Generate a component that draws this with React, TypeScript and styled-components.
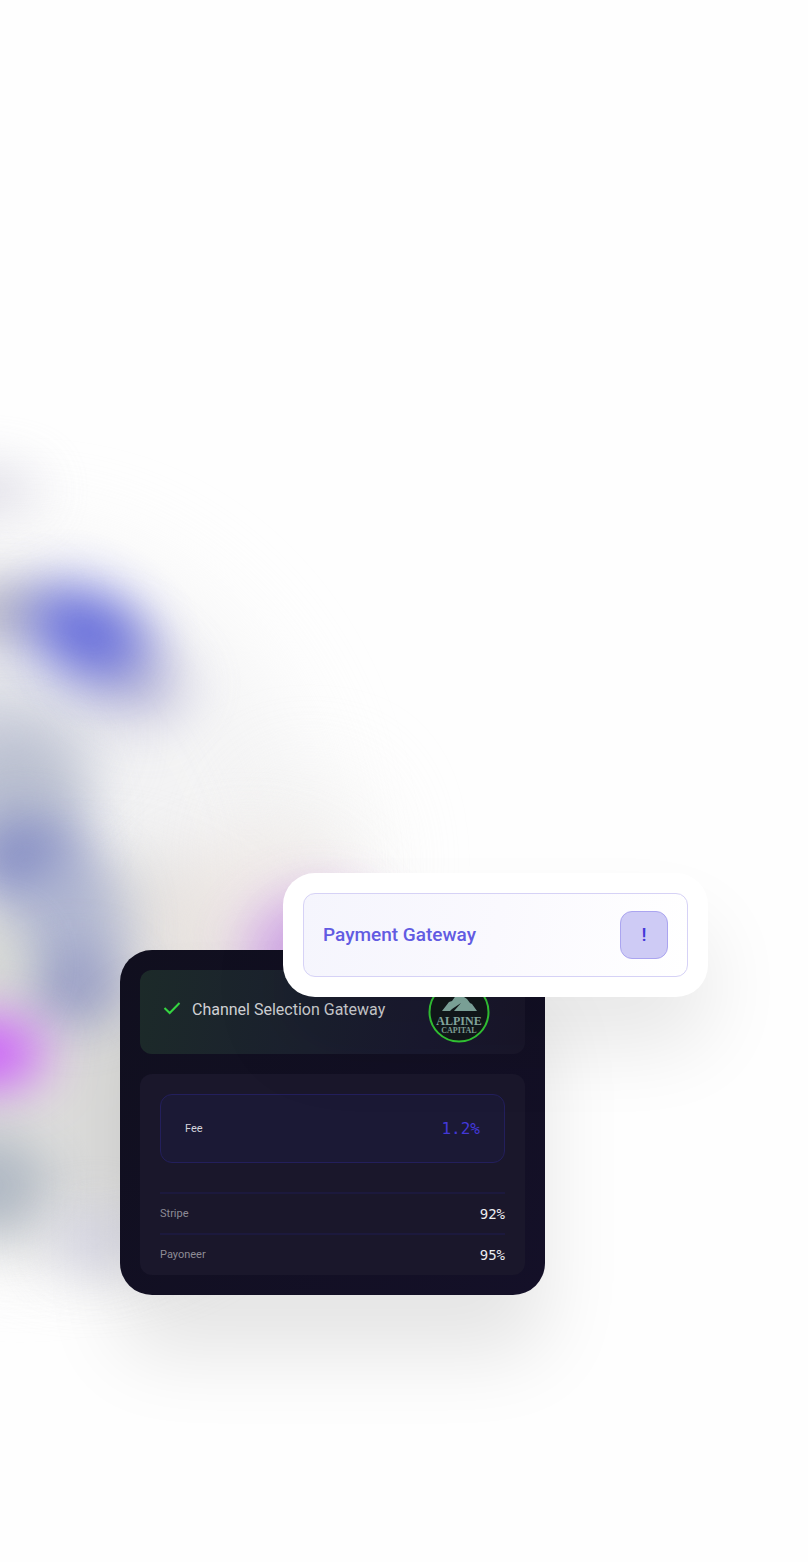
import React from "react";
import styled, { createGlobalStyle } from "styled-components";

const GlobalStyle = createGlobalStyle`
  *, *::before, *::after { box-sizing: border-box; }
  body {
    margin: 0;
    background: #fefefe;
    font-family: Roboto, "Noto Sans", sans-serif;
  }
`;

const Page = styled.main`
  position: relative;
  overflow: hidden;
  padding: 873px 100px 267px 120px;
`;

const Backdrop = styled.svg`
  position: absolute;
  top: 0;
  left: 0;
`;

const Cards = styled.div`
  position: relative;
  display: flex;
  flex-direction: column;
`;

const Card = styled.section`
  width: 425px;
  max-width: 100%;
  padding: 20px;
  border-radius: 32px;
`;

const GatewayCard = styled(Card)`
  position: relative;
  z-index: 1;
  align-self: flex-end;
  background: #ffffff;
  box-shadow: 0 50px 80px rgba(0, 0, 0, 0.09);
`;

const GatewayField = styled.div`
  display: flex;
  align-items: center;
  justify-content: space-between;
  height: 84px;
  padding: 0 19px;
  border: 1px solid #d6d2f6;
  border-radius: 12px;
  background: linear-gradient(100deg, #f5f5fd, #faf9fe 50%, #ffffff);
`;

const GatewayTitle = styled.h2`
  margin: 0;
  color: #625be2;
  font-size: 19px;
  font-weight: 500;
  line-height: 24px;
`;

const AlertButton = styled.button`
  width: 48px;
  height: 48px;
  padding: 0;
  border: 1px solid #aba5f0;
  border-radius: 12px;
  background: #cecbf5;
  color: #4338d8;
  font: 500 19px/24px Roboto, sans-serif;
`;

const ChannelCard = styled(Card)`
  display: flex;
  flex-direction: column;
  gap: 20px;
  margin-top: -47px;
  background: linear-gradient(135deg, #100f1e, #141028);
  box-shadow: 0 60px 80px rgba(0, 0, 0, 0.1);
`;

const ChannelRow = styled.header`
  display: flex;
  align-items: center;
  gap: 8px;
  height: 84px;
  padding: 0 35px 0 20px;
  border-radius: 12px;
  background: linear-gradient(100deg, #1c2a29, #1b202f 45%, #1a1930 75%, #19162a);
`;

const ChannelTitle = styled.h2`
  flex: 1;
  margin: 0;
  padding-bottom: 4px;
  color: #d0d1d4;
  font-size: 16px;
  font-weight: 400;
  line-height: 24px;
  white-space: nowrap;
`;

const CheckMark = styled.svg`
  margin-bottom: 6px;
  flex: none;
`;

const DetailPanel = styled.div`
  padding: 20px 20px 1px;
  border-radius: 12px;
  background: #1a172b;
`;

const FeeBox = styled.dl`
  display: flex;
  align-items: center;
  justify-content: space-between;
  height: 69px;
  margin: 0 0 29px;
  padding: 0 24px;
  border: 1px solid #231f5c;
  border-radius: 12px;
  background: #1b1935;
`;

const RateList = styled.dl`
  margin: 0;
`;

const RateRow = styled.div`
  display: flex;
  align-items: center;
  justify-content: space-between;
  height: 41px;
  border-top: 2px solid #1c193d;
`;

const Label = styled.dt<{ $bright?: boolean }>`
  color: ${({ $bright }) => ($bright ? "#d4d3dc" : "#8d8b95")};
  font-size: 11px;
  line-height: 16px;
`;

const Value = styled.dd<{ $accent?: boolean }>`
  margin: 0;
  color: ${({ $accent }) => ($accent ? "#4338d8" : "#ececf0")};
  font-family: "DejaVu Sans Mono", monospace;
  font-size: ${({ $accent }) => ($accent ? "16px" : "14px")};
  line-height: 16px;
`;

type Blob = {
  x: number;
  y: number;
  rx: number;
  ry: number;
  color: string;
  opacity: number;
  blur: "s" | "m" | "l";
  turn?: number;
};

const blobs: Blob[] = [
  { x: 20, y: 890, rx: 300, ry: 350, color: "#ededee", opacity: 0.6, blur: "l" },
  { x: 310, y: 860, rx: 60, ry: 80, color: "#ecebe9", opacity: 0.6, blur: "l" },
  { x: 90, y: 1060, rx: 210, ry: 205, color: "#d8d8d6", opacity: 0.8, blur: "m" },
  { x: 250, y: 930, rx: 110, ry: 90, color: "#eee6e2", opacity: 0.7, blur: "m" },
  { x: -20, y: 490, rx: 60, ry: 20, color: "#c9c7d6", opacity: 0.75, blur: "s" },
  { x: -10, y: 735, rx: 110, ry: 60, color: "#cdd0dc", opacity: 0.8, blur: "m" },
  { x: 5, y: 612, rx: 55, ry: 28, color: "#8c8ca8", opacity: 0.7, blur: "s" },
  { x: 128, y: 672, rx: 62, ry: 42, color: "#aaa9cf", opacity: 0.7, blur: "s", turn: 35 },
  { x: 86, y: 632, rx: 62, ry: 42, color: "#5a62da", opacity: 0.9, blur: "s", turn: 25 },
  { x: 15, y: 805, rx: 74, ry: 74, color: "#adb4c8", opacity: 0.75, blur: "s", turn: -12 },
  { x: 26, y: 860, rx: 54, ry: 42, color: "#747dc0", opacity: 0.8, blur: "s" },
  { x: 68, y: 925, rx: 56, ry: 74, color: "#a4acce", opacity: 0.75, blur: "s" },
  { x: 76, y: 988, rx: 46, ry: 36, color: "#8389bd", opacity: 0.7, blur: "s" },
  { x: -14, y: 966, rx: 42, ry: 38, color: "#d6d9d4", opacity: 0.95, blur: "s" },
  { x: -14, y: 1053, rx: 58, ry: 34, color: "#ca55fb", opacity: 1, blur: "s" },
  { x: -15, y: 1185, rx: 64, ry: 48, color: "#a9b3c0", opacity: 0.9, blur: "s" },
  { x: 95, y: 1240, rx: 46, ry: 30, color: "#d5d5e8", opacity: 0.8, blur: "s" },
  { x: 318, y: 952, rx: 72, ry: 58, color: "#cf9aed", opacity: 0.8, blur: "s" },
];

const rates = [
  { name: "Stripe", value: "92%" },
  { name: "Payoneer", value: "95%" },
];

function Glow() {
  return (
    <Backdrop width="808" height="1562" viewBox="0 0 808 1562" aria-hidden="true">
      <defs>
        <filter id="blur-s" x="-200%" y="-200%" width="500%" height="500%" colorInterpolationFilters="sRGB">
          <feGaussianBlur stdDeviation="26" />
        </filter>
        <filter id="blur-m" x="-100%" y="-100%" width="300%" height="300%" colorInterpolationFilters="sRGB">
          <feGaussianBlur stdDeviation="34" />
        </filter>
        <filter id="blur-l" x="-200%" y="-200%" width="500%" height="500%" colorInterpolationFilters="sRGB">
          <feGaussianBlur stdDeviation="48" />
        </filter>
      </defs>
      {blobs.map((b, i) => (
        <ellipse
          key={i}
          cx={b.x}
          cy={b.y}
          rx={b.rx}
          ry={b.ry}
          fill={b.color}
          opacity={b.opacity}
          filter={`url(#blur-${b.blur})`}
          transform={b.turn ? `rotate(${b.turn} ${b.x} ${b.y})` : undefined}
        />
      ))}
    </Backdrop>
  );
}

function AlpineLogo() {
  return (
    <svg width="62" height="62" viewBox="0 0 62 62" role="img" aria-label="Alpine Capital">
      <circle cx="31" cy="31" r="29.5" fill="#12181b" stroke="#33c935" strokeWidth="2" />
      <path d="M14 30 L21 21 L24 20 L29 13 L32 9 L36 16 L39 18 L42 22 L44 23 L49 30 H26 L33 22 L24 28 L22 30 Z" fill="#83aca1" />
      <text x="31" y="44" textAnchor="middle" fill="#8bb0a7" fontFamily="Liberation Serif, serif" fontWeight="700" fontSize="12">
        ALPINE
      </text>
      <text x="31" y="52" textAnchor="middle" fill="#83a49c" fontFamily="Liberation Serif, serif" fontWeight="700" fontSize="8">
        CAPITAL
      </text>
    </svg>
  );
}

export default function App() {
  return (
    <>
      <GlobalStyle />
      <Page>
        <Glow />
        <Cards>
          <GatewayCard>
            <GatewayField>
              <GatewayTitle>Payment Gateway</GatewayTitle>
              <AlertButton type="button">!</AlertButton>
            </GatewayField>
          </GatewayCard>
          <ChannelCard>
            <ChannelRow>
              <CheckMark width="24" height="24" viewBox="0 0 24 24" aria-hidden="true">
                <path d="M4.5 11 L9.7 16 L19.5 6" fill="none" stroke="#35d541" strokeWidth="2" />
              </CheckMark>
              <ChannelTitle>Channel Selection Gateway</ChannelTitle>
              <AlpineLogo />
            </ChannelRow>
            <DetailPanel>
              <FeeBox>
                <Label $bright>Fee</Label>
                <Value $accent>1.2%</Value>
              </FeeBox>
              <RateList>
                {rates.map((rate) => (
                  <RateRow key={rate.name}>
                    <Label>{rate.name}</Label>
                    <Value>{rate.value}</Value>
                  </RateRow>
                ))}
              </RateList>
            </DetailPanel>
          </ChannelCard>
        </Cards>
      </Page>
    </>
  );
}
